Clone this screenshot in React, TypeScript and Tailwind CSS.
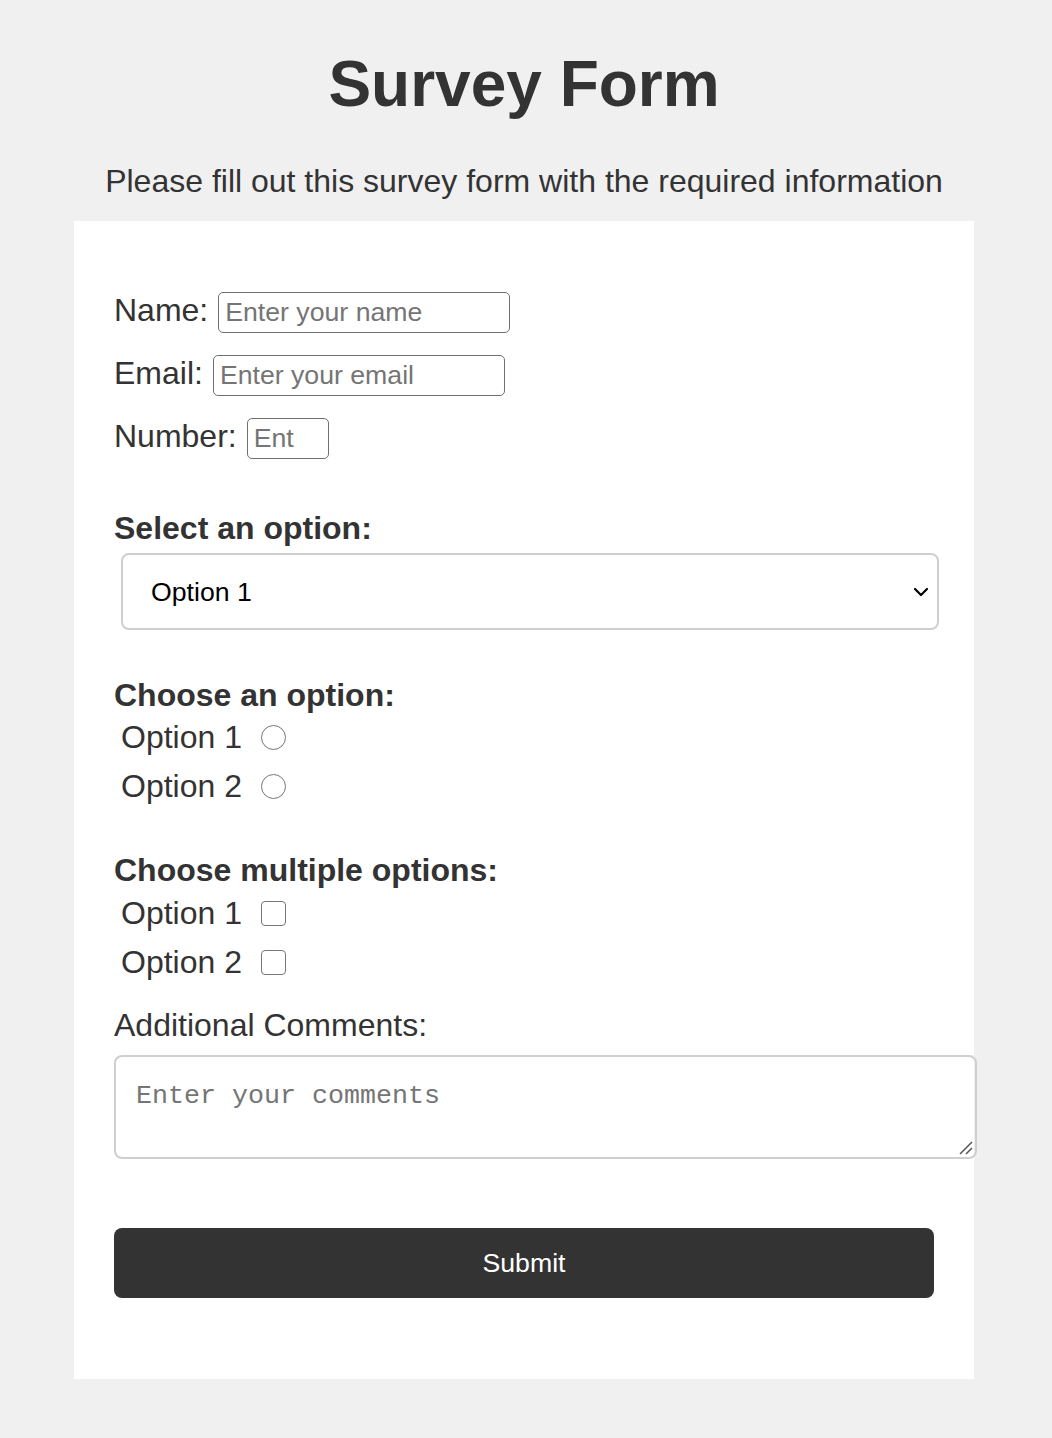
import { ChevronDown } from 'lucide-react'

const font = "font-['Liberation_Sans',Arial,sans-serif]"

function TextRow({ label, type, placeholder, width }: { label: string; type: string; placeholder: string; width: string }) {
  return (
    <div className="flex items-start gap-[10px] h-[41px]">
      <label className="text-[32px] leading-[36px] text-[#333]">{label}</label>
      <input
        type={type}
        placeholder={placeholder}
        className={`${width} h-[41px] border-[1.5px] border-[#6f6f6f] rounded-[5px] pl-[6px] pr-[4px] text-[26.67px] text-[#333] placeholder:text-[#757575] outline-none`}
      />
    </div>
  )
}

function ChoiceRow({ label, type, name }: { label: string; type: 'radio' | 'checkbox'; name: string }) {
  return (
    <div className="flex items-center h-[36px] ml-[7px]">
      <span className="text-[32px] leading-[36px] text-[#333]">{label}</span>
      <input
        type={type}
        name={name}
        className={`appearance-none m-0 ml-[19px] w-[25px] h-[25px] border-[1.5px] border-[#767676] bg-white ${type === 'radio' ? 'rounded-full' : 'rounded-[4px]'}`}
      />
    </div>
  )
}

export default function App() {
  return (
    <div className={`min-h-screen bg-[#f0f0f0] pt-[47px] ${font}`}>
      <div className="w-[1048px]">
        <h1 className="text-center text-[64px] leading-[74px] font-bold text-[#333]">Survey Form</h1>
        <p className="text-center text-[32px] leading-[37px] text-[#333] mt-[42px] mb-[21px]">
          Please fill out this survey form with the required information
        </p>

        {/* Card */}
        <form className="mx-auto w-[900px] bg-white px-[40px] pt-[71px] pb-[81px]" onSubmit={(e) => e.preventDefault()}>
          <div className="flex flex-col gap-[22px]">
            <TextRow label="Name:" type="text" placeholder="Enter your name" width="w-[292px]" />
            <TextRow label="Email:" type="email" placeholder="Enter your email" width="w-[292px]" />
            <TextRow label="Number:" type="text" placeholder="Ent" width="w-[82px]" />
          </div>

          <h2 className="mt-[51px] text-[32px] leading-[36px] font-bold text-[#333]">Select an option:</h2>
          <div className="relative mt-[7px] ml-[7px] w-[818px]">
            <select className="appearance-none w-full h-[77px] border-2 border-[#cfcfcf] rounded-[8px] bg-white pl-[28px] text-[26.67px] text-black outline-none">
              <option>Option 1</option>
              <option>Option 2</option>
            </select>
            <ChevronDown className="absolute right-[6px] top-[27px] w-[24px] h-[24px] text-black pointer-events-none" strokeWidth={2.2} />
          </div>

          <h2 className="mt-[47px] text-[32px] leading-[36px] font-bold text-[#333]">Choose an option:</h2>
          <div className="mt-[6px] flex flex-col gap-[13px]">
            <ChoiceRow label="Option 1" type="radio" name="choice" />
            <ChoiceRow label="Option 2" type="radio" name="choice" />
          </div>

          <h2 className="mt-[48px] text-[32px] leading-[36px] font-bold text-[#333]">Choose multiple options:</h2>
          <div className="mt-[7px] flex flex-col gap-[13px]">
            <ChoiceRow label="Option 1" type="checkbox" name="multi1" />
            <ChoiceRow label="Option 2" type="checkbox" name="multi2" />
          </div>

          <label className="block mt-[27px] text-[32px] leading-[36px] text-[#333]">Additional Comments:</label>
          <div className="relative mt-[12px] w-[863px]">
            <textarea
              placeholder="Enter your comments"
              className="block w-full h-[104px] border-2 border-[#cfcfcf] rounded-[8px] pt-[19px] pl-[20px] font-['Liberation_Mono','Courier_New',monospace] text-[26.67px] placeholder:text-[#757575] outline-none resize-none"
            />
            <svg className="absolute right-[3px] bottom-[3px] pointer-events-none" width="16" height="16" viewBox="0 0 16 16">
              <path d="M14 2 L2 14 M14 8 L8 14" stroke="#555" strokeWidth="1.5" />
            </svg>
          </div>

          <button
            type="submit"
            className="block mt-[69px] w-[820px] h-[70px] rounded-[8px] bg-[#333] text-white text-[26.67px]"
          >
            Submit
          </button>
        </form>
      </div>
    </div>
  )
}
